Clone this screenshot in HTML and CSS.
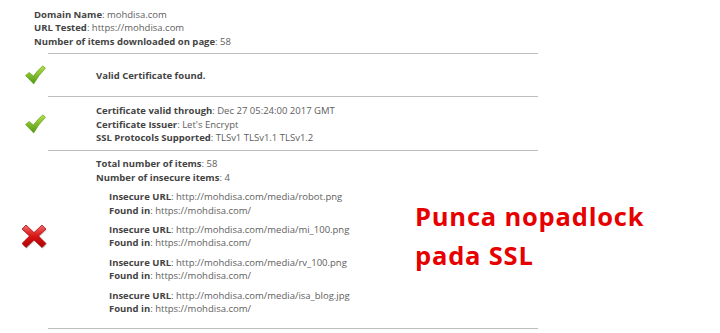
FILE: index.html
```html
<!DOCTYPE html>
<html>
<head>
<meta charset="utf-8">
<link rel="stylesheet" href="styles.css">
</head>
<body>
<div class="page">
  <div class="meta">
    <div><b>Domain Name</b>: mohdisa.com</div>
    <div><b>URL Tested</b>: https://mohdisa.com</div>
    <div><b>Number of items downloaded on page</b>: 58</div>
  </div>
  <div class="sep"></div>
  <div class="row row-one">
    <div class="icon">
      <svg width="21" height="20" viewBox="0 0 20 19"><defs><linearGradient id="g1" x1="0" y1="0" x2="0" y2="1"><stop offset="0" stop-color="#b8e04a"/><stop offset="1" stop-color="#4f9a10"/></linearGradient></defs><path d="M0.5 10 L4 7 L8 10.5 Q12 5 17 0.8 L19.5 3 Q13 9.5 8.3 18 Z" fill="url(#g1)" stroke="#5c9a1c" stroke-width="0.6" stroke-linejoin="round"/></svg>
    </div>
    <div class="content"><b>Valid Certificate found.</b></div>
  </div>
  <div class="sep"></div>
  <div class="row row-two">
    <div class="icon">
      <svg width="21" height="20" viewBox="0 0 20 19"><defs><linearGradient id="g2" x1="0" y1="0" x2="0" y2="1"><stop offset="0" stop-color="#b8e04a"/><stop offset="1" stop-color="#4f9a10"/></linearGradient></defs><path d="M0.5 10 L4 7 L8 10.5 Q12 5 17 0.8 L19.5 3 Q13 9.5 8.3 18 Z" fill="url(#g2)" stroke="#5c9a1c" stroke-width="0.6" stroke-linejoin="round"/></svg>
    </div>
    <div class="content">
      <div><b>Certificate valid through</b>: Dec 27 05:24:00 2017 GMT</div>
      <div><b>Certificate Issuer</b>: Let's Encrypt</div>
      <div><b>SSL Protocols Supported</b>: TLSv1 TLSv1.1 TLSv1.2</div>
    </div>
  </div>
  <div class="sep"></div>
  <div class="row row-three">
    <div class="icon">
      <svg width="26" height="25" viewBox="0 0 26 25"><defs><linearGradient id="r1" x1="0" y1="0" x2="0" y2="1"><stop offset="0" stop-color="#f46a6a"/><stop offset="0.5" stop-color="#d81414"/><stop offset="1" stop-color="#b00000"/></linearGradient></defs><g transform="translate(0.8 1.2)" opacity="0.25"><path d="M4 1 L12 8.5 L20 1 L24 5 L16.5 12 L24 19.5 L20 23.5 L12 16 L4 23.5 L0 19.5 L7.5 12 L0 5 Z" fill="#555"/></g><path d="M4 1 L12 8.5 L20 1 L24 5 L16.5 12 L24 19.5 L20 23.5 L12 16 L4 23.5 L0 19.5 L7.5 12 L0 5 Z" fill="url(#r1)" stroke="#9a0000" stroke-width="0.7" stroke-linejoin="round"/></svg>
    </div>
    <div class="content">
      <div><b>Total number of items</b>: 58</div>
      <div><b>Number of insecure items</b>: 4</div>
      <div class="items">
        <div class="item">
          <div><b>Insecure URL</b>: http://mohdisa.com/media/robot.png</div>
          <div><b>Found in</b>: https://mohdisa.com/</div>
        </div>
        <div class="item">
          <div><b>Insecure URL</b>: http://mohdisa.com/media/mi_100.png</div>
          <div><b>Found in</b>: https://mohdisa.com/</div>
        </div>
        <div class="item">
          <div><b>Insecure URL</b>: http://mohdisa.com/media/rv_100.png</div>
          <div><b>Found in</b>: https://mohdisa.com/</div>
        </div>
        <div class="item">
          <div><b>Insecure URL</b>: http://mohdisa.com/media/isa_blog.jpg</div>
          <div><b>Found in</b>: https://mohdisa.com/</div>
        </div>
      </div>
    </div>
  </div>
  <div class="sep"></div>
</div>
<div class="callout">Punca nopadlock<br>pada SSL</div>
</body>
</html>
```
FILE: styles.css
```css
html, body {
  margin: 0;
  padding: 0;
  background: #ffffff;
}
body {
  font-family: "Open Sans", "DejaVu Sans", sans-serif;
  font-size: 9.5px;
  line-height: 13.4px;
  color: #5e5e5e;
  width: 720px;
  height: 333px;
  overflow: hidden;
  position: relative;
}
b {
  color: #444444;
  font-weight: bold;
}
.meta {
  padding: 8px 0 5px 34px;
}
.sep {
  margin-left: 48px;
  width: 490px;
  height: 1px;
  background: #bdbdbd;
}
.row {
  display: grid;
  grid-template-columns: 70px 1fr;
  column-gap: 26px;
  align-items: center;
}
.icon {
  display: flex;
  justify-content: center;
  align-items: center;
}
.icon svg {
  display: block;
}
.row-one {
  height: 42px;
}
.row-two {
  padding: 7px 0 6px;
}
.row-three {
  padding: 6px 0 12px;
}
.items {
  margin-top: 6px;
  padding-left: 13px;
  display: flex;
  flex-direction: column;
  gap: 6px;
}
.callout {
  position: absolute;
  left: 415px;
  top: 197px;
  font-family: "Open Sans", "DejaVu Sans", sans-serif;
  font-weight: bold;
  font-size: 25.5px;
  letter-spacing: 0.8px;
  line-height: 39px;
  color: #e60000;
}
```
